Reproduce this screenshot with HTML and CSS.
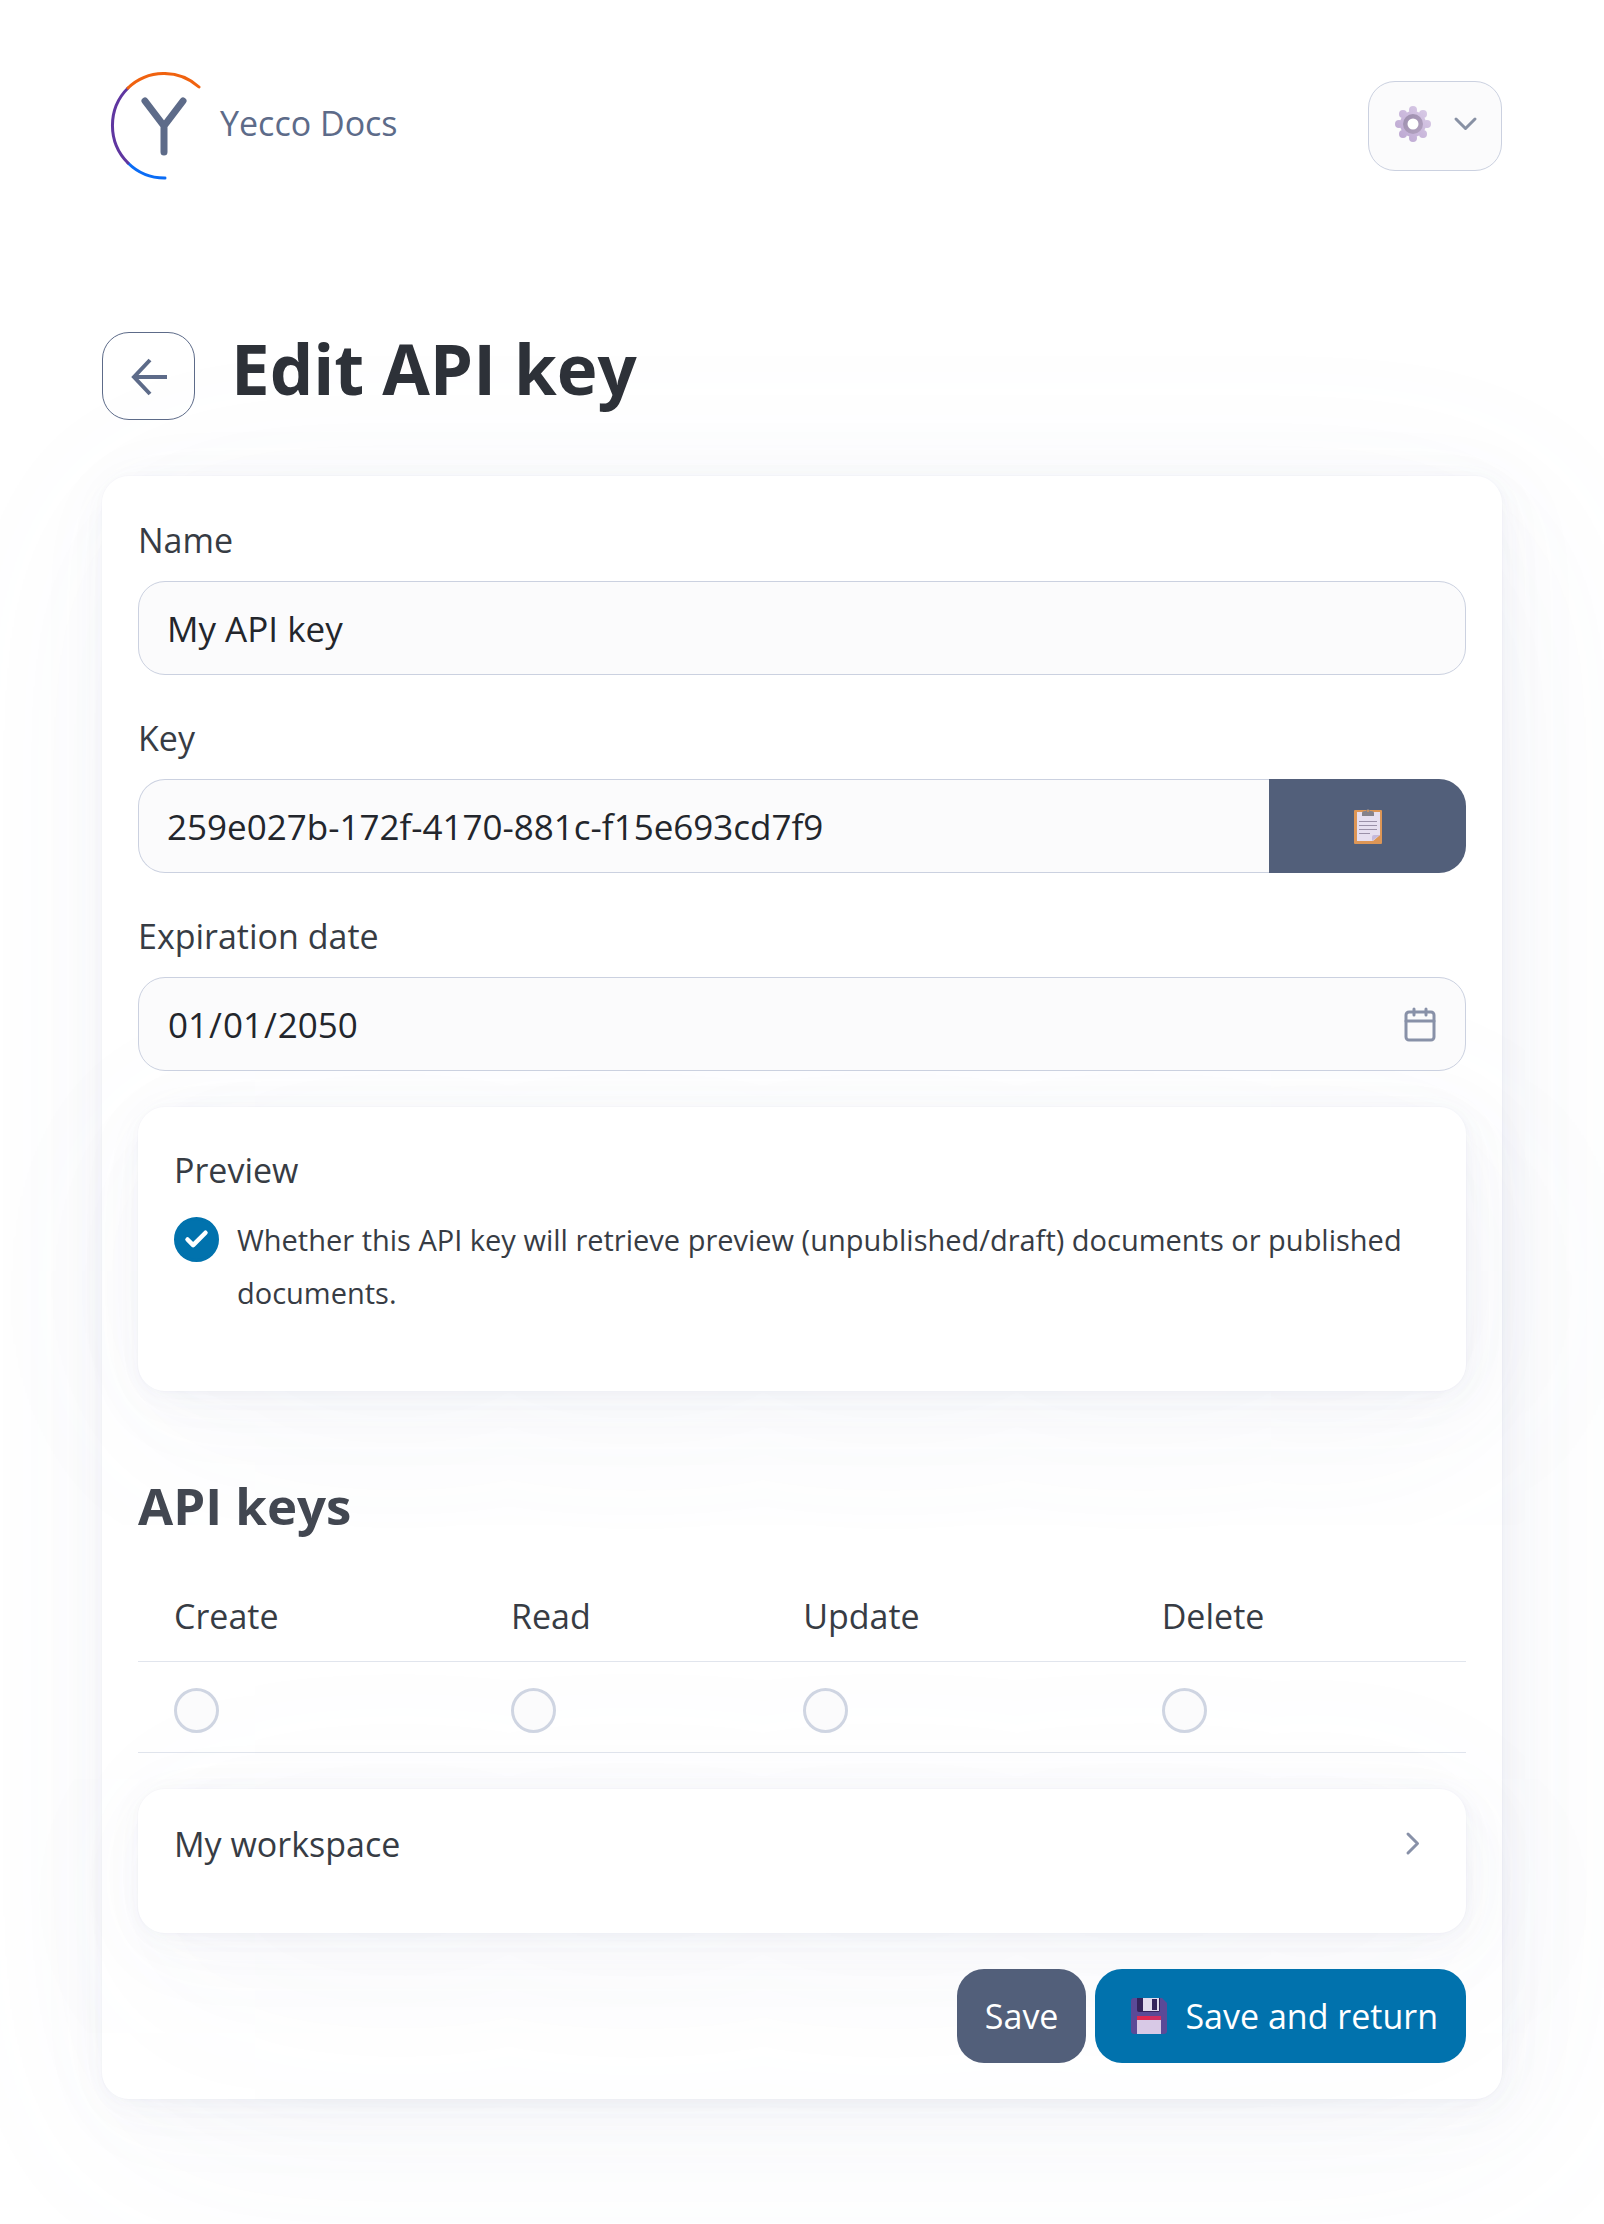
FILE: index.html
```html
<!DOCTYPE html>
<html lang="en">
<head>
    <meta charset="UTF-8">
    <meta name="viewport" content="width=device-width, initial-scale=1.0">
    <title>Edit API key - Yecco Docs</title>
    <link rel="stylesheet" href="styles.css">
</head>
<body>
    <div class="container">
        <header class="topbar">
            <a class="brand" href="#">
                <svg class="brand-logo" viewBox="0 0 108 108" fill="none" stroke-linecap="round" aria-hidden="true">
                    <path d="M63 106A52 52 0 0 1 26 91" stroke="#0a6cf5" stroke-width="3"/>
                    <path d="M26 91A53 53 0 0 1 26 16" stroke="#5f36a0" stroke-width="3"/>
                    <path d="M26 16A52 52 0 0 1 97 15" stroke="#f0620f" stroke-width="3"/>
                    <path d="M43 29L62 54L81 29M62 54V80" stroke="#5d6b89" stroke-width="7" stroke-linejoin="round"/>
                </svg>
                <span>Yecco Docs</span>
            </a>
            <button class="menu-btn" type="button" aria-label="Settings">
                <svg class="icon" viewBox="0 0 36 36" aria-hidden="true">
                    <defs>
                        <linearGradient id="gearRing" x1="0" y1="0" x2="1" y2="1">
                            <stop offset="0" stop-color="#9d8fae"/>
                            <stop offset="1" stop-color="#b3a2c0"/>
                        </linearGradient>
                        <linearGradient id="gearTeeth" gradientUnits="userSpaceOnUse" x1="0" y1="36" x2="36" y2="0">
                            <stop offset="0" stop-color="#b9a3cf"/>
                            <stop offset="1" stop-color="#dccfe9"/>
                        </linearGradient>
                    </defs>
                    <g fill="url(#gearTeeth)">
                        <circle cx="18" cy="18" r="13"/>
                        <circle cx="18" cy="4" r="4"/>
                        <circle cx="18" cy="32" r="4"/>
                        <circle cx="4" cy="18" r="4"/>
                        <circle cx="32" cy="18" r="4"/>
                        <circle cx="8" cy="8" r="4"/>
                        <circle cx="28" cy="8" r="4"/>
                        <circle cx="8" cy="28" r="4"/>
                        <circle cx="28" cy="28" r="4"/>
                    </g>
                    <circle cx="18" cy="18" r="10" fill="url(#gearRing)"/>
                    <circle cx="18" cy="18" r="5.500" fill="#fff"/>
                </svg>
                <svg class="icon" viewBox="0 0 36 36" fill="none" stroke="#8891a4" stroke-width="3" stroke-linecap="round" stroke-linejoin="round" aria-hidden="true">
                    <path d="M9 13L18.500 22.500L28 13"/>
                </svg>
            </button>
        </header>

        <main>
            <div class="page-title">
                <a class="back-btn" href="#" aria-label="Back">
                    <svg class="icon" viewBox="0 0 36 36" fill="none" stroke="#5d6b89" stroke-width="4" aria-hidden="true">
                        <path d="M36 19H3M19 2L3 19L19 36"/>
                    </svg>
                </a>
                <h1>Edit API key</h1>
            </div>

            <form class="card main-card">
                <label for="name">Name</label>
                <input class="field" type="text" id="name" value="My API key">

                <label for="key">Key</label>
                <div class="key-group">
                    <input class="field" type="text" id="key" value="259e027b-172f-4170-881c-f15e693cd7f9" readonly>
                    <button class="copy-btn" type="button" aria-label="Copy key">
                        <svg class="icon" viewBox="0 0 36 36" aria-hidden="true">
                            <rect x="4" y="2" width="28" height="34" rx="1" fill="#dd9656"/>
                            <path d="M7 4H30V27L23 33H7Z" fill="#e6dff0"/>
                            <path d="M22 33V29Q22 27 24 27H30Z" fill="#c5b9dc"/>
                            <path d="M12 8V5Q12 3 15 3H16Q18 -1 20 3H21Q24 3 24 5V8Z" fill="#85828b"/>
                            <circle cx="18" cy="3" r="1" fill="#dd9656"/>
                            <path d="M9 13.500H27M9 17.500H27M9 21.500H27M9 25.500H20" stroke="#9a90a8" stroke-width="1"/>
                        </svg>
                    </button>
                </div>

                <label for="expiration">Expiration date</label>
                <div class="date-wrap">
                    <input class="field" type="date" id="expiration" value="2050-01-01">
                    <svg class="icon date-icon" viewBox="0 0 36 36" fill="none" stroke="#8891a8" stroke-width="3" stroke-linecap="round" stroke-linejoin="round" aria-hidden="true">
                        <rect x="4" y="6" width="28" height="28" rx="3"/>
                        <path d="M12 3V9M24 3V9M4 15H32"/>
                    </svg>
                </div>

                <div class="card preview-card">
                    <label for="preview">Preview</label>
                    <div class="check-row">
                        <input class="check" type="checkbox" id="preview" aria-describedby="preview-help" checked>
                        <small id="preview-help">Whether this API key will retrieve preview (unpublished/draft) documents or published documents.</small>
                    </div>
                </div>

                <h2>API keys</h2>
                <table>
                    <thead>
                        <tr>
                            <th class="col-create" id="create">Create</th>
                            <th class="col-read" id="read">Read</th>
                            <th class="col-update" id="update">Update</th>
                            <th class="col-delete" id="delete">Delete</th>
                        </tr>
                    </thead>
                    <tbody>
                        <tr>
                            <td><input class="check" type="checkbox" aria-labelledby="create"></td>
                            <td><input class="check" type="checkbox" aria-labelledby="read"></td>
                            <td><input class="check" type="checkbox" aria-labelledby="update"></td>
                            <td><input class="check" type="checkbox" aria-labelledby="delete"></td>
                        </tr>
                    </tbody>
                </table>

                <details class="card workspace">
                    <summary>
                        My workspace
                        <svg class="icon" viewBox="0 0 36 36" fill="none" stroke="#8891a8" stroke-width="3" stroke-linecap="round" stroke-linejoin="round" aria-hidden="true">
                            <path d="M14 8L23.500 17.500L14 27"/>
                        </svg>
                    </summary>
                </details>

                <div class="actions">
                    <button class="btn btn-secondary" type="submit">Save</button>
                    <button class="btn btn-primary" type="submit">
                        <svg class="icon" viewBox="0 0 36 36" aria-hidden="true">
                            <path d="M3 0H31L36 5V33Q36 36 33 36H3Q0 36 0 33V3Q0 0 3 0Z" fill="#5b4a97"/>
                            <path d="M6 0H29V12Q29 14 27 14H8Q6 14 6 12Z" fill="#35235c"/>
                            <path d="M12 0H28V13H12Z" fill="#e2dbee"/>
                            <path d="M21 1H26V12H21Z" fill="#35235c"/>
                            <path d="M6 18H30V23H6Z" fill="#e0284f"/>
                            <path d="M19 18H30V23H19Z" fill="#cf2f62"/>
                            <path d="M6 22H30V36H6Z" fill="#d8c9e6"/>
                        </svg>
                        Save and return
                    </button>
                </div>
            </form>
        </main>
    </div>
</body>
</html>
```
FILE: styles.css
```css
/* Basic styles */
* {
    box-sizing: border-box;
}
body {
    font-family: 'Segoe UI', 'Open Sans', 'Noto Sans', sans-serif;
    font-size: 34px;
    line-height: 54px;
    margin: 0;
    background-color: #fff;
    color: #373c44;
}
.container {
    max-width: 1472px;
    margin: 0 auto;
    padding: 72px 36px 124px;
}
a {
    text-decoration: none;
}
.icon {
    width: 36px;
    height: 36px;
    flex: none;
    overflow: visible;
}

/* Header */
.topbar {
    display: flex;
    justify-content: space-between;
    align-items: center;
    margin-bottom: 152px;
}
.brand {
    display: flex;
    align-items: center;
    gap: 10px;
    color: #5d6b89;
}
.brand span {
    padding-bottom: 6px;
}
.brand-logo {
    width: 108px;
    height: 108px;
}
.menu-btn {
    display: flex;
    align-items: center;
    justify-content: center;
    gap: 16px;
    width: 134px;
    height: 90px;
    padding: 0 0 4px 8px;
    border: 1px solid #cbd1e0;
    border-radius: 27px;
    background-color: #fbfbfc;
    cursor: pointer;
}

/* Page title */
.page-title {
    display: flex;
    align-items: flex-start;
    gap: 36px;
    margin-bottom: 56px;
}
.back-btn {
    display: flex;
    align-items: center;
    justify-content: center;
    width: 93px;
    height: 88px;
    border: 1px solid #5d6b89;
    border-radius: 27px;
}
h1 {
    margin: 0;
    font-size: 69px;
    line-height: 72px;
    font-weight: 700;
    color: #2d3138;
}
h2 {
    margin: 83px 0 34px;
    font-size: 51px;
    line-height: 63px;
    font-weight: 700;
    color: #424751;
}

/* Cards */
.card {
    border-radius: 27px;
    background-color: #fff;
    box-shadow:
        1px 1px 6px rgba(129, 145, 181, 0.017),
        1px 2px 14px rgba(129, 145, 181, 0.024),
        2px 4px 27px rgba(129, 145, 181, 0.03),
        4px 8px 49px rgba(129, 145, 181, 0.036),
        8px 15px 90px rgba(129, 145, 181, 0.043),
        18px 36px 216px rgba(129, 145, 181, 0.06),
        0 0 0 1px rgba(129, 145, 181, 0.015);
}
.main-card {
    padding: 37px 36px 36px;
}

/* Form fields */
label {
    display: block;
    margin-bottom: 14px;
}
.field {
    display: block;
    width: 100%;
    height: 94px;
    margin-bottom: 36px;
    padding: 0 28px;
    border: 1px solid #cbd1e0;
    border-radius: 27px;
    background-color: #fbfbfc;
    color: #23262c;
    font-family: inherit;
    font-size: 35px;
}
.key-group {
    display: flex;
    margin-bottom: 36px;
}
.key-group .field {
    flex: 1;
    min-width: 0;
    margin-bottom: 0;
    border-right: 0;
    border-radius: 27px 0 0 27px;
}
.copy-btn {
    display: flex;
    align-items: center;
    justify-content: center;
    width: 197px;
    border: 0;
    border-radius: 0 27px 27px 0;
    background-color: #525f7a;
    cursor: pointer;
}
.date-wrap {
    position: relative;
}
.date-icon {
    position: absolute;
    top: 29px;
    right: 28px;
    pointer-events: none;
}
input[type="date"]::-webkit-calendar-picker-indicator {
    width: 36px;
    height: 36px;
    padding: 0;
    opacity: 0;
}

/* Round check boxes */
.check {
    appearance: none;
    flex: none;
    width: 45px;
    height: 45px;
    margin: 0;
    border: 3px solid #cfd5e2;
    border-radius: 50%;
    background-color: #fbfbfc;
    vertical-align: middle;
    cursor: pointer;
}
.check:checked {
    border-color: #0172ad;
    background: #0172ad url("data:image/svg+xml,%3Csvg xmlns='http://www.w3.org/2000/svg' viewBox='0 0 24 24' fill='none' stroke='%23fff' stroke-width='4' stroke-linecap='round' stroke-linejoin='round'%3E%3Cpath d='M20 6L9 17L4 12'/%3E%3C/svg%3E") center / 27px no-repeat;
}

/* Preview */
.preview-card {
    padding: 36px 36px 72px;
}
.check-row {
    display: flex;
    align-items: flex-start;
    gap: 18px;
    padding-top: 2px;
}
.check-row .check {
    margin-top: 4px;
}
.check-row small {
    font-size: 29px;
    line-height: 53px;
}

/* Permissions table */
table {
    width: 100%;
    margin-bottom: 36px;
    border-collapse: collapse;
    table-layout: fixed;
}
th, td {
    padding: 18px 36px;
    border-bottom: 1px solid #e1e5ed;
    text-align: left;
    font-weight: 400;
}
.col-create { width: 337px; }
.col-read { width: 22%; }
.col-update { width: 27%; }

/* Workspace */
.workspace {
    padding: 37px 36px 71px;
    margin-bottom: 36px;
}
summary {
    display: flex;
    justify-content: space-between;
    line-height: 36px;
    list-style: none;
    cursor: pointer;
}

/* Buttons */
.actions {
    display: flex;
    justify-content: flex-end;
    gap: 9px;
}
.btn {
    display: flex;
    align-items: center;
    gap: 18px;
    height: 94px;
    padding: 0 28px;
    border: 0;
    border-radius: 27px;
    color: #fff;
    font-family: inherit;
    font-size: inherit;
    cursor: pointer;
}
.btn-secondary {
    background-color: #525f7a;
}
.btn-primary {
    padding-left: 36px;
    background-color: #0172ad;
}
```
